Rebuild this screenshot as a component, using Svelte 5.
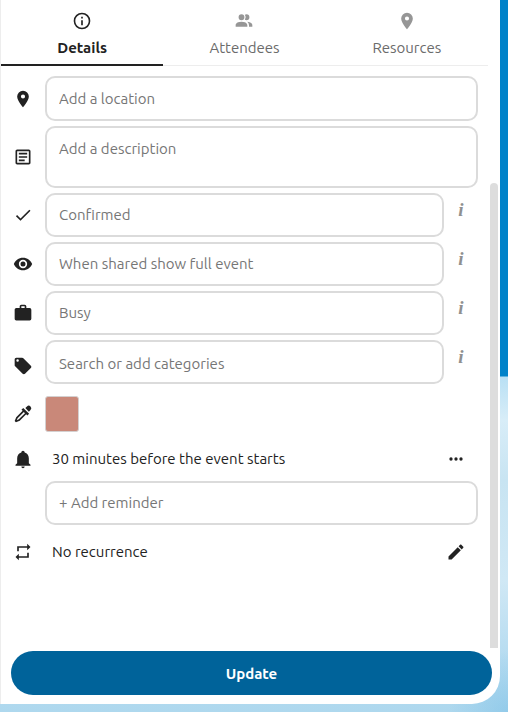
<script>
  const icons = {
    info: 'M11 9H13V7H11M12 20C7.59 20 4 16.41 4 12S7.59 4 12 4 20 7.59 20 12 16.41 20 12 20M12 2A10 10 0 0 0 2 12A10 10 0 0 0 12 22A10 10 0 0 0 22 12A10 10 0 0 0 12 2M11 17H13V11H11V17Z',
    people: 'M16 17V19H2V17S2 13 9 13 16 17 16 17M12.5 7.5A3.5 3.5 0 1 0 9 11A3.5 3.5 0 0 0 12.5 7.5M15.94 13A5.32 5.32 0 0 1 18 17V19H22V17S22 13.37 15.94 13M15 4A3.39 3.39 0 0 0 13.07 4.59A5 5 0 0 1 13.07 10.41A3.39 3.39 0 0 0 15 11A3.5 3.5 0 0 0 15 4Z',
    pin: 'M12 11.5A2.5 2.5 0 0 1 9.5 9A2.5 2.5 0 0 1 12 6.5A2.5 2.5 0 0 1 14.5 9A2.5 2.5 0 0 1 12 11.5M12 2A7 7 0 0 0 5 9C5 14.25 12 22 12 22S19 14.25 19 9A7 7 0 0 0 12 2Z',
    text: 'M5 3C3.89 3 3 3.89 3 5V19C3 20.11 3.89 21 5 21H19C20.11 21 21 20.11 21 19V5C21 3.89 20.11 3 19 3H5M5 5H19V19H5V5M7 7V9H17V7H7M7 11V13H17V11H7M7 15V17H14V15H7Z',
    check: 'M21 7L9 19L3.5 13.5L4.91 12.09L9 16.17L19.59 5.59L21 7Z',
    eye: 'M12 9A3 3 0 0 0 9 12A3 3 0 0 0 12 15A3 3 0 0 0 15 12A3 3 0 0 0 12 9M12 17A5 5 0 0 1 7 12A5 5 0 0 1 12 7A5 5 0 0 1 17 12A5 5 0 0 1 12 17M12 4.5C7 4.5 2.73 7.61 1 12C2.73 16.39 7 19.5 12 19.5S21.27 16.39 23 12C21.27 7.61 17 4.5 12 4.5Z',
    bag: 'M10 2H14A2 2 0 0 1 16 4V6H20A2 2 0 0 1 22 8V19A2 2 0 0 1 20 21H4C2.89 21 2 20.1 2 19V8C2 6.89 2.89 6 4 6H8V4C8 2.89 8.89 2 10 2M14 6V4H10V6H14Z',
    tag: 'M5.5 7A1.5 1.5 0 0 1 4 5.5A1.5 1.5 0 0 1 5.5 4A1.5 1.5 0 0 1 7 5.5A1.5 1.5 0 0 1 5.5 7M21.41 11.58L12.41 2.58C12.05 2.22 11.55 2 11 2H4C2.89 2 2 2.89 2 4V11C2 11.55 2.22 12.05 2.59 12.41L11.58 21.41C11.95 21.77 12.45 22 13 22S14.05 21.77 14.41 21.41L21.41 14.41C21.78 14.05 22 13.55 22 13C22 12.44 21.77 11.94 21.41 11.58Z',
    dropper: 'M19.35 11.72L17.22 13.85L15.81 12.43L8.1 20.14L3.5 22L2 20.5L3.86 15.9L11.57 8.19L10.15 6.78L12.28 4.65L19.35 11.72M16.76 3A3 3 0 0 1 21 3A3 3 0 0 1 21 7.24L19.08 9.16L14.84 4.92L16.76 3M5.56 17.03L4.5 19.5L6.97 18.44L14.4 11L13 9.6L5.56 17.03Z',
    bell: 'M21 19V20H3V19L5 17V11C5 7.9 7.03 5.17 10 4.29C10 4.19 10 4.1 10 4A2 2 0 0 1 12 2A2 2 0 0 1 14 4C14 4.1 14 4.19 14 4.29C16.97 5.17 19 7.9 19 11V17L21 19M14 21A2 2 0 0 1 12 23A2 2 0 0 1 10 21',
    repeat: 'M17 17H7V14L3 18L7 22V19H19V13H17M7 7H17V10L21 6L17 2V5H5V11H7V7Z',
    dots: 'M16 12A2 2 0 0 1 18 10A2 2 0 0 1 20 12A2 2 0 0 1 18 14A2 2 0 0 1 16 12M10 12A2 2 0 0 1 12 10A2 2 0 0 1 14 12A2 2 0 0 1 12 14A2 2 0 0 1 10 12M4 12A2 2 0 0 1 6 10A2 2 0 0 1 8 12A2 2 0 0 1 6 14A2 2 0 0 1 4 12Z',
    pencil: 'M20.71 7.04C21.1 6.65 21.1 6 20.71 5.63L18.37 3.29C18 2.9 17.35 2.9 16.96 3.29L15.12 5.12L18.87 8.87M3 17.25V21H6.75L17.81 9.93L14.06 6.18L3 17.25Z'
  };

  const tabs = [
    { id: 'details', label: 'Details', icon: 'info' },
    { id: 'attendees', label: 'Attendees', icon: 'people' },
    { id: 'resources', label: 'Resources', icon: 'pin' }
  ];
  let active = $state('details');

  const selects = [
    { id: 'status', label: 'Status', icon: 'check', options: ['Confirmed', 'Tentative', 'Canceled'] },
    { id: 'visibility', label: 'Visibility', icon: 'eye', options: ['When shared show full event', 'When shared show only busy', 'When shared hide this event'] },
    { id: 'availability', label: 'Availability', icon: 'bag', options: ['Busy', 'Free'] }
  ];
</script>

{#snippet icon(name)}
  <svg viewBox="0 0 24 24" width="20" height="20" aria-hidden="true"><path d={icons[name]} /></svg>
{/snippet}

<div class="page">
  <aside class="sidebar">
    <div class="scroller">
      <div class="content">
        <div class="tabs" role="tablist">
          {#each tabs as tab}
            <button
              type="button"
              role="tab"
              class="tab"
              class:active={active === tab.id}
              aria-selected={active === tab.id}
              onclick={() => (active = tab.id)}
            >
              {@render icon(tab.icon)}
              <span>{tab.label}</span>
            </button>
          {/each}
        </div>

        <div class="rows">
          <div class="row">
            <label class="lead" for="location" aria-label="Location">{@render icon('pin')}</label>
            <input id="location" class="field tall" type="text" placeholder="Add a location" />
          </div>
          <div class="row">
            <label class="lead" for="description" aria-label="Description">{@render icon('text')}</label>
            <textarea id="description" class="field" placeholder="Add a description"></textarea>
          </div>

          {#each selects as item}
            <div class="row">
              <label class="lead" for={item.id} aria-label={item.label}>{@render icon(item.icon)}</label>
              <select id={item.id} class="field">
                {#each item.options as option}
                  <option>{option}</option>
                {/each}
              </select>
              <button type="button" class="hint" aria-label="About {item.label}">i</button>
            </div>
          {/each}

          <div class="row categories">
            <label class="lead" for="categories" aria-label="Categories">{@render icon('tag')}</label>
            <input id="categories" class="field" type="text" placeholder="Search or add categories" />
            <button type="button" class="hint" aria-label="About Categories">i</button>
          </div>

          <div class="row color">
            <span class="lead">{@render icon('dropper')}</span>
            <button type="button" class="swatch" aria-label="Event color"></button>
          </div>

          <div class="reminders">
            <div class="row">
              <span class="lead">{@render icon('bell')}</span>
              <span class="value">30 minutes before the event starts</span>
              <button type="button" class="action" aria-label="Reminder actions">{@render icon('dots')}</button>
            </div>
            <div class="row">
              <span class="lead"></span>
              <select class="field" aria-label="Add reminder">
                <option>+ Add reminder</option>
                <option>At the time the event starts</option>
              </select>
            </div>
          </div>

          <div class="row">
            <span class="lead">{@render icon('repeat')}</span>
            <span class="value">No recurrence</span>
            <button type="button" class="action" aria-label="Edit recurrence">{@render icon('pencil')}</button>
          </div>
        </div>
      </div>
      <div class="rail"><div class="thumb"></div></div>
    </div>
    <footer>
      <button type="button" class="update">Update</button>
    </footer>
  </aside>
</div>

<style>
  .page,
  .page :global(*) {
    box-sizing: border-box;
  }
  .page {
    display: flex;
    min-height: 100vh;
    padding: 0 8px 8px 0;
    color: #222;
    font-family: Ubuntu, 'Noto Sans', 'Open Sans', sans-serif;
    font-size: 15px;
    line-height: 20px;
    background:
      radial-gradient(circle at 100% 100%, rgba(120, 190, 230, 0.5), transparent 60px),
      linear-gradient(#0082c9 376px, #b9e0f4 377px, #d8edf8 420px, #c8e4f2 480px, #d0e8f5 580px, #b5dbf0 660px, #aed8ee 100%);
  }
  button,
  input,
  select,
  textarea {
    margin: 0;
    font: inherit;
    color: inherit;
  }
  button {
    padding: 0;
    border: 0;
    background: none;
    cursor: pointer;
  }
  svg {
    display: block;
    fill: currentColor;
  }
  .sidebar {
    flex: 1;
    min-width: 0;
    display: flex;
    flex-direction: column;
    border-left: 1px solid #ededed;
    border-radius: 0 0 28px 0;
    background: #fff;
  }
  .scroller {
    flex: 1;
    display: flex;
  }
  .content {
    flex: 1;
    min-width: 0;
  }
  .rail {
    display: flex;
    width: 12px;
    padding: 183px 2px 0;
  }
  .thumb {
    flex: 1;
    border-radius: 4px 4px 0 0;
    background: #ddd;
  }
  .tabs {
    display: flex;
  }
  .tab {
    flex: 1;
    display: flex;
    flex-direction: column;
    align-items: center;
    gap: 7px;
    padding: 11px 0 6px;
    border-bottom: 1px solid #ededed;
    color: #6b6b6b;
  }
  .tab svg {
    opacity: 0.7;
  }
  .tab.active {
    border-bottom: 2px solid #222;
    color: #222;
    font-weight: 700;
  }
  .tab.active svg {
    opacity: 1;
  }
  .rows {
    display: flex;
    flex-direction: column;
    gap: 5px;
    padding: 10px 10px 0 0;
  }
  .row {
    display: flex;
    align-items: center;
  }
  .lead {
    flex: none;
    display: flex;
    justify-content: center;
    width: 44px;
  }
  .field {
    flex: 1;
    min-width: 0;
    height: 44px;
    padding: 0 12px;
    border: 2px solid #dbdbdb;
    border-radius: 10px;
    outline: 0;
    background: #fff;
    color: #767676;
    appearance: none;
  }
  .field::placeholder {
    color: #767676;
    opacity: 1;
  }
  .field.tall {
    height: 45px;
  }
  textarea.field {
    display: block;
    height: 62px;
    padding: 11px 12px;
    resize: none;
  }
  .hint {
    align-self: flex-start;
    width: 34px;
    height: 34px;
    color: #909090;
    font: italic 700 19px/34px 'Liberation Serif', serif;
  }
  .categories .lead {
    padding-top: 8px;
  }
  .categories .field {
    padding-top: 2px;
  }
  .color {
    padding-top: 7px;
  }
  .swatch {
    width: 34px;
    height: 36px;
    border: 1px solid #d4d0d0;
    border-radius: 3px;
    background: #c98879;
  }
  .reminders .row {
    height: 44px;
  }
  .value {
    flex: 1;
    padding-left: 7px;
  }
  .action {
    display: flex;
    align-items: center;
    justify-content: center;
    width: 44px;
    height: 44px;
  }
  footer {
    padding: 3px 8px 9px 10px;
  }
  .update {
    width: 100%;
    height: 44px;
    padding-top: 2px;
    border-radius: 22px;
    background: #00639a;
    color: #fff;
    font-weight: 700;
  }
</style>
